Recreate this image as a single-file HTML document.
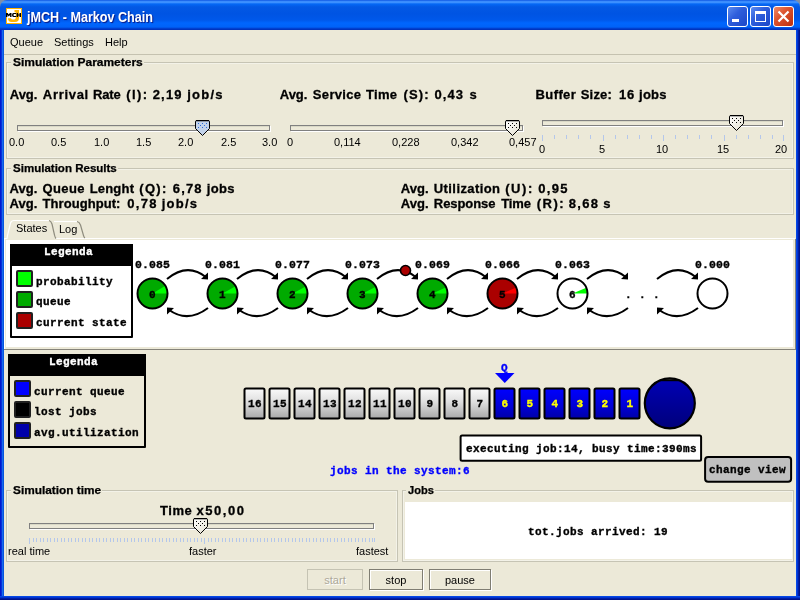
<!DOCTYPE html>
<html>
<head>
<meta charset="utf-8">
<title>jMCH - Markov Chain</title>
<style>
html,body{margin:0;padding:0;}
body{width:800px;height:600px;overflow:hidden;background:#ECE9D8;position:relative;font-family:"Liberation Sans",sans-serif;font-size:11px;color:#000;}
.abs{position:absolute;will-change:opacity;}
#titlebar{left:0;top:0;width:800px;height:30px;background:linear-gradient(to bottom,#0046DB 0px,#3A8AFB 1px,#3C90FF 2.5px,#0568F5 4px,#0358E4 7px,#0054E3 14px,#0058EA 20px,#0066FE 23px,#0062F8 27px,#0040D0 28.5px,#002CB5 30px);border-radius:7px 7px 0 0;}
#bl{left:0;top:30px;width:4px;height:570px;background:linear-gradient(to right,#0019CF 0px,#0019CF 1px,#0831D9 1px,#0831D9 2px,#166AEE 2px,#166AEE 3px,#0855DD 3px,#0855DD 4px);}
#br{left:796px;top:30px;width:4px;height:570px;background:linear-gradient(to right,#0547E6 0px,#0547E6 1px,#0035D2 1px,#0035D2 2px,#001EA6 2px,#001EA6 3px,#001289 3px,#001289 4px);}
#bb{left:0;top:596px;width:800px;height:4px;background:linear-gradient(to bottom,#0547E6 0px,#0547E6 1px,#0035D2 1px,#0035D2 2px,#001EA6 2px,#001EA6 3px,#001289 3px,#001289 4px);}
#title{left:27px;top:9px;font-weight:bold;font-size:14px;color:#fff;white-space:nowrap;text-shadow:1px 1px 1px #0A1883;transform:scaleX(0.9);transform-origin:0 0;line-height:16px;}
.menu{top:36px;font-size:11px;white-space:nowrap;line-height:13px;}
.grp{border:1px solid #C6C4B4;box-sizing:border-box;box-shadow:inset 0 0 0 1px #F3F2E8;}
.gt{-webkit-text-stroke:0.25px #000;font-weight:bold;font-size:10px;white-space:nowrap;line-height:13px;transform-origin:0 0;}
.gap{background:#ECE9D8;height:2px;}
.big{-webkit-text-stroke:0.3px #000;font-weight:bold;font-size:13px;white-space:nowrap;line-height:15px;letter-spacing:0.55px;}
.sl{font-size:11px;white-space:nowrap;line-height:13px;}
.track{box-sizing:border-box;height:6px;border:1px solid #808080;background:linear-gradient(to bottom,#D9D8C6 0px,#D9D8C6 1px,#ECE9D8 1px);box-shadow:1px 1px 0 #fff;}
.mono{-webkit-text-stroke:0.35px currentColor;font-family:"Liberation Mono",monospace;font-weight:bold;white-space:nowrap;letter-spacing:0.4px;}
.btn{box-sizing:border-box;border:1px solid #003C74;border-radius:3px;background:linear-gradient(to bottom,#fff,#F0EFE6 85%,#D6D0C5);font-size:11px;text-align:center;line-height:19px;}
</style>
</head>
<body>
<div id="titlebar" class="abs"></div>
<div id="bl" class="abs"></div>
<div id="br" class="abs"></div>
<div id="bb" class="abs"></div>

<div class="abs" style="left:0;top:0;width:8px;height:8px;background:#7F8FA8;z-index:-1;"></div>
<div class="abs" style="left:792px;top:0;width:8px;height:8px;background:#7F8FA8;z-index:-1;"></div>
<svg class="abs" style="left:6px;top:8px;" width="16" height="16" viewBox="0 0 16 16"><rect width="16" height="16" fill="#FFB400"/><rect x="1" y="1" width="14" height="14" fill="#fff"/><path d="M8.5,2 L13,2 L13,10 Q13,14 9,14 L5.5,14 Q2,13.8 2,10.2 L5,10.2 Q5.3,11.6 6.8,11.6 L8.2,11.6 Q9.8,11.6 9.8,9.6 L9.8,4.2 L8.5,4.2 Z" fill="#FFB400"/><g fill="#000"><path d="M0,9 V5 H1.6 L2.75,6.6 L3.9,5 H5.5 V9 H4.1 V7 L2.75,8.6 L1.4,7 V9 Z"/><path d="M10,5 H7.5 Q6,5 6,7 Q6,9 7.5,9 H10 V7.9 H8 Q7.5,7.9 7.5,7 Q7.5,6.1 8,6.1 H10 Z"/><path d="M10.6,5 H12.1 V6.4 H13.5 V5 H15 V9 H13.5 V7.6 H12.1 V9 H10.6 Z"/></g></svg>
<!-- window buttons -->
<div class="abs" style="left:727px;top:6px;width:21px;height:21px;box-sizing:border-box;border:1px solid #fff;border-radius:3px;background:linear-gradient(135deg,#5C8CF0 0%,#2F5FDC 40%,#1C46C8 100%);"></div>
<div class="abs" style="left:732px;top:19px;width:7px;height:3px;background:#fff;"></div>
<div class="abs" style="left:750px;top:6px;width:21px;height:21px;box-sizing:border-box;border:1px solid #fff;border-radius:3px;background:linear-gradient(135deg,#5C8CF0 0%,#2F5FDC 40%,#1C46C8 100%);"></div>
<div class="abs" style="left:755px;top:11px;width:11px;height:11px;box-sizing:border-box;border:1px solid #fff;border-top:3px solid #fff;"></div>
<div class="abs" style="left:773px;top:6px;width:21px;height:21px;box-sizing:border-box;border:1px solid #fff;border-radius:3px;background:linear-gradient(135deg,#EE8A68 0%,#DC5430 40%,#BE2E0C 100%);"></div>
<svg class="abs" style="left:773px;top:6px;" width="21" height="21" viewBox="0 0 21 21"><path d="M5.5,5.5 L15.5,15.5 M15.5,5.5 L5.5,15.5" stroke="#fff" stroke-width="2.2" fill="none"/></svg>
<div id="title" class="abs">jMCH - Markov Chain</div>

<div class="abs menu" style="left:10px;">Queue</div>
<div class="abs menu" style="left:54px;">Settings</div>
<div class="abs menu" style="left:105px;">Help</div>
<div class="abs" style="left:4px;top:54px;width:792px;height:1px;background:#C5C2B0;"></div>

<div class="abs grp" style="left:6px;top:62px;width:788px;height:97px;"></div>
<div class="abs gap" style="left:11px;top:62px;width:133px;"></div><div class="abs gt" style="left:12.7px;top:56px;transform:scaleX(1.197);">Simulation Parameters</div>

<div class="abs grp" style="left:6px;top:168px;width:788px;height:47px;"></div>
<div class="abs gap" style="left:11px;top:168px;width:107px;"></div><div class="abs gt" style="left:12.7px;top:162px;transform:scaleX(1.153);">Simulation Results</div>

<!-- Parameter labels -->
<!--t_arr--><span class="abs big" style="left:9.8px;top:87px;letter-spacing:-0.05px;">Avg.</span><span class="abs big" style="left:42.8px;top:87px;letter-spacing:0.70px;">Arrival</span><span class="abs big" style="left:93.1px;top:87px;letter-spacing:-0.20px;">Rate</span><span class="abs big" style="left:126.2px;top:87px;letter-spacing:1.43px;">(l):</span><span class="abs big" style="left:152.7px;top:87px;letter-spacing:1.20px;">2,19</span><span class="abs big" style="left:187.2px;top:87px;letter-spacing:1.24px;">job/s</span><!--/t_arr-->
<!--t_srv--><span class="abs big" style="left:279.8px;top:87px;letter-spacing:-0.05px;">Avg.</span><span class="abs big" style="left:312.8px;top:87px;letter-spacing:0.34px;">Service</span><span class="abs big" style="left:366.0px;top:87px;letter-spacing:0.30px;">Time</span><span class="abs big" style="left:403.4px;top:87px;letter-spacing:1.18px;">(S):</span><span class="abs big" style="left:434.4px;top:87px;letter-spacing:1.11px;">0,43</span><span class="abs big" style="left:469.5px;top:87px;letter-spacing:0.00px;">s</span><!--/t_srv-->
<!--t_buf--><span class="abs big" style="left:535.6px;top:87px;letter-spacing:0.38px;">Buffer</span><span class="abs big" style="left:580.8px;top:87px;letter-spacing:0.15px;">Size:</span><span class="abs big" style="left:619.0px;top:87px;letter-spacing:0.73px;">16</span><span class="abs big" style="left:639.1px;top:87px;letter-spacing:0.19px;">jobs</span><!--/t_buf-->

<!-- slider 1 -->
<div class="abs track" style="left:17px;top:125px;width:253px;"></div>
<svg class="abs" style="left:195px;top:120px;" width="15" height="16" viewBox="0 0 15 16"><path d="M1,0.6 L0.5,1.2 L0.5,8.5 L7.5,15.5 L14.5,8.5 L14.5,1.2 L14,0.6 Z" fill="#C3D3EA" stroke="#000" stroke-width="1"/><rect x="1" y="0" width="13" height="1.2" fill="#000"/><g fill="#2A6BD8"><rect x="3" y="3" width="1" height="1"/><rect x="7" y="3" width="1" height="1"/><rect x="11" y="3" width="1" height="1"/><rect x="5" y="5" width="1" height="1"/><rect x="9" y="5" width="1" height="1"/><rect x="3" y="7" width="1" height="1"/><rect x="7" y="7" width="1" height="1"/><rect x="11" y="7" width="1" height="1"/></g></svg>
<div class="abs sl" style="left:9px;top:136px;">0.0</div>
<div class="abs sl" style="left:51px;top:136px;">0.5</div>
<div class="abs sl" style="left:94px;top:136px;">1.0</div>
<div class="abs sl" style="left:136px;top:136px;">1.5</div>
<div class="abs sl" style="left:178px;top:136px;">2.0</div>
<div class="abs sl" style="left:221px;top:136px;">2.5</div>
<div class="abs sl" style="left:262px;top:136px;">3.0</div>

<!-- slider 2 -->
<div class="abs track" style="left:290px;top:125px;width:233px;"></div>
<svg class="abs" style="left:505px;top:120px;" width="15" height="16" viewBox="0 0 15 16"><defs><linearGradient id="tg" x1="0" y1="0" x2="1" y2="1"><stop offset="0" stop-color="#fff"/><stop offset="1" stop-color="#E3E0D0"/></linearGradient></defs><path d="M1,0.6 L0.5,1.2 L0.5,8.5 L7.5,15.5 L14.5,8.5 L14.5,1.2 L14,0.6 Z" fill="url(#tg)" stroke="#000" stroke-width="1"/><rect x="1" y="0" width="13" height="1.2" fill="#000"/><g fill="#000"><rect x="3" y="3" width="1" height="1"/><rect x="7" y="3" width="1" height="1"/><rect x="11" y="3" width="1" height="1"/><rect x="5" y="5" width="1" height="1"/><rect x="9" y="5" width="1" height="1"/><rect x="3" y="7" width="1" height="1"/><rect x="7" y="7" width="1" height="1"/><rect x="11" y="7" width="1" height="1"/></g></svg>
<div class="abs sl" style="left:287px;top:136px;">0</div>
<div class="abs sl" style="left:334px;top:136px;">0,114</div>
<div class="abs sl" style="left:392px;top:136px;">0,228</div>
<div class="abs sl" style="left:451px;top:136px;">0,342</div>
<div class="abs sl" style="left:509px;top:136px;">0,457</div>

<!-- slider 3 -->
<div class="abs track" style="left:542px;top:120px;width:241px;"></div>
<svg class="abs" style="left:729px;top:115px;" width="15" height="16" viewBox="0 0 15 16"><path d="M1,0.6 L0.5,1.2 L0.5,8.5 L7.5,15.5 L14.5,8.5 L14.5,1.2 L14,0.6 Z" fill="url(#tg)" stroke="#000" stroke-width="1"/><rect x="1" y="0" width="13" height="1.2" fill="#000"/><g fill="#000"><rect x="3" y="3" width="1" height="1"/><rect x="7" y="3" width="1" height="1"/><rect x="11" y="3" width="1" height="1"/><rect x="5" y="5" width="1" height="1"/><rect x="9" y="5" width="1" height="1"/><rect x="3" y="7" width="1" height="1"/><rect x="7" y="7" width="1" height="1"/><rect x="11" y="7" width="1" height="1"/></g></svg>
<svg class="abs" style="left:540px;top:135px;" width="250" height="8" viewBox="0 0 250 8"><rect x="2" y="0" width="1" height="6" fill="#B4C7EB"/><rect x="14" y="0" width="1" height="4" fill="#B4C7EB"/><rect x="26" y="0" width="1" height="4" fill="#B4C7EB"/><rect x="38" y="0" width="1" height="4" fill="#B4C7EB"/><rect x="50" y="0" width="1" height="4" fill="#B4C7EB"/><rect x="63" y="0" width="1" height="6" fill="#B4C7EB"/><rect x="75" y="0" width="1" height="4" fill="#B4C7EB"/><rect x="87" y="0" width="1" height="4" fill="#B4C7EB"/><rect x="99" y="0" width="1" height="4" fill="#B4C7EB"/><rect x="111" y="0" width="1" height="4" fill="#B4C7EB"/><rect x="123" y="0" width="1" height="6" fill="#B4C7EB"/><rect x="135" y="0" width="1" height="4" fill="#B4C7EB"/><rect x="147" y="0" width="1" height="4" fill="#B4C7EB"/><rect x="159" y="0" width="1" height="4" fill="#B4C7EB"/><rect x="171" y="0" width="1" height="4" fill="#B4C7EB"/><rect x="184" y="0" width="1" height="6" fill="#B4C7EB"/><rect x="196" y="0" width="1" height="4" fill="#B4C7EB"/><rect x="208" y="0" width="1" height="4" fill="#B4C7EB"/><rect x="220" y="0" width="1" height="4" fill="#B4C7EB"/><rect x="232" y="0" width="1" height="4" fill="#B4C7EB"/><rect x="243" y="0" width="1" height="6" fill="#B4C7EB"/></svg>
<div class="abs sl" style="left:539px;top:143px;">0</div>
<div class="abs sl" style="left:599px;top:143px;">5</div>
<div class="abs sl" style="left:656px;top:143px;">10</div>
<div class="abs sl" style="left:717px;top:143px;">15</div>
<div class="abs sl" style="left:775px;top:143px;">20</div>

<!-- results -->
<!--r1--><span class="abs big" style="left:9.6px;top:181px;letter-spacing:0.03px;">Avg.</span><span class="abs big" style="left:42.6px;top:181px;letter-spacing:0.36px;">Queue</span><span class="abs big" style="left:89.7px;top:181px;letter-spacing:0.19px;">Lenght</span><span class="abs big" style="left:139.2px;top:181px;letter-spacing:1.36px;">(Q):</span><span class="abs big" style="left:172.8px;top:181px;letter-spacing:1.13px;">6,78</span><span class="abs big" style="left:206.7px;top:181px;letter-spacing:0.36px;">jobs</span><!--/r1-->
<!--r2--><span class="abs big" style="left:9.6px;top:196px;letter-spacing:0.03px;">Avg.</span><span class="abs big" style="left:42.6px;top:196px;letter-spacing:0.06px;">Throughput:</span><span class="abs big" style="left:127.2px;top:196px;letter-spacing:1.33px;">0,78</span><span class="abs big" style="left:161.7px;top:196px;letter-spacing:1.24px;">job/s</span><!--/r2-->
<!--r3--><span class="abs big" style="left:400.8px;top:181px;letter-spacing:0.03px;">Avg.</span><span class="abs big" style="left:433.8px;top:181px;letter-spacing:0.41px;">Utilization</span><span class="abs big" style="left:505.2px;top:181px;letter-spacing:1.60px;">(U):</span><span class="abs big" style="left:538.2px;top:181px;letter-spacing:1.33px;">0,95</span><!--/r3-->
<!--r4--><span class="abs big" style="left:400.8px;top:196px;letter-spacing:0.03px;">Avg.</span><span class="abs big" style="left:433.8px;top:196px;letter-spacing:-0.06px;">Response</span><span class="abs big" style="left:501.3px;top:196px;letter-spacing:-0.17px;">Time</span><span class="abs big" style="left:536.7px;top:196px;letter-spacing:1.50px;">(R):</span><span class="abs big" style="left:568.8px;top:196px;letter-spacing:1.33px;">8,68</span><span class="abs big" style="left:603.3px;top:196px;letter-spacing:0.00px;">s</span><!--/r4-->
























<!-- LOWER -->

<!-- tabs -->
<div class="abs" style="left:4px;top:238px;width:791px;height:1px;background:#fff;"></div>
<div class="abs" style="left:4px;top:239px;width:1px;height:110px;background:#fff;"></div>
<div class="abs" style="left:6px;top:240px;width:787px;height:107px;background:#fff;"></div>
<div class="abs" style="left:4px;top:349px;width:792px;height:1px;background:#86847A;"></div>
<div class="abs" style="left:795px;top:239px;width:1px;height:111px;background:#86847A;"></div>
<svg class="abs" style="left:0;top:215px;" width="120" height="26" viewBox="0 0 120 26">
<path d="M4,25 L7,23.5 L7.5,20.5 L10.5,8 Q11.5,5.5 14,5.5 L49,5.5 Q51,6 52,9 L54.5,20 Q55,22.5 56,23.5 L56,25 L4,25 Z" fill="#ECE9D8"/>
<path d="M4,23.5 L7,23.5 L7.5,20.5 L10.5,8 Q11.5,5.5 14,5.5 L49,5.5" fill="none" stroke="#fff" stroke-width="1.2"/>
<path d="M49,5.5 Q51,6 52,9 L54.5,20 Q55,22.5 56,23.5" fill="none" stroke="#8E8C7E" stroke-width="1.2"/>
<path d="M54,6.5 L77,6.5" fill="none" stroke="#fff" stroke-width="1.2"/>
<path d="M77,6.5 Q79.5,7 80.5,10 L83.5,20.5 Q84,22.5 85,23" fill="none" stroke="#8E8C7E" stroke-width="1.2"/>
</svg>
<div id="tab1" class="abs" style="left:16px;top:222px;font-size:11px;line-height:13px;white-space:nowrap;">States</div>
<div id="tab2" class="abs" style="left:59px;top:223px;font-size:11px;line-height:13px;white-space:nowrap;">Log</div>

<div class="abs" style="left:10px;top:244px;width:123px;height:94px;box-sizing:border-box;border:2px solid #000;background:#fff;border-radius:1px;"></div>
<div class="abs" style="left:10px;top:244px;width:123px;height:22px;background:#000;"></div>
<div id="lah" class="abs mono" style="left:44px;top:245px;color:#fff;font-size:11px;line-height:14px;">Legenda</div>
<div class="abs" style="left:16px;top:270px;width:17px;height:17px;box-sizing:border-box;border:2px solid #202020;border-radius:2px;background:#00FF00;"></div>
<div id="la0" class="abs mono" style="left:36px;top:275px;font-size:11px;line-height:14px;">probability</div>
<div class="abs" style="left:16px;top:291px;width:17px;height:17px;box-sizing:border-box;border:2px solid #202020;border-radius:2px;background:#00AA00;"></div>
<div id="la1" class="abs mono" style="left:36px;top:295px;font-size:11px;line-height:14px;">queue</div>
<div class="abs" style="left:16px;top:312px;width:17px;height:17px;box-sizing:border-box;border:2px solid #202020;border-radius:2px;background:#AA0000;"></div>
<div id="la2" class="abs mono" style="left:36px;top:316px;font-size:11px;line-height:14px;">current state</div>

<div class="abs" style="left:8px;top:354px;width:138px;height:94px;box-sizing:border-box;border:2px solid #000;background:#ECE9D8;border-radius:1px;"></div>
<div class="abs" style="left:8px;top:354px;width:138px;height:22px;background:#000;"></div>
<div id="lbh" class="abs mono" style="left:49px;top:355px;color:#fff;font-size:11px;line-height:14px;">Legenda</div>
<div class="abs" style="left:14px;top:380px;width:17px;height:17px;box-sizing:border-box;border:2px solid #202020;border-radius:2px;background:#0000FF;"></div>
<div id="lb0" class="abs mono" style="left:34px;top:385px;font-size:11px;line-height:14px;">current queue</div>
<div class="abs" style="left:14px;top:401px;width:17px;height:17px;box-sizing:border-box;border:2px solid #202020;border-radius:2px;background:#000000;"></div>
<div id="lb1" class="abs mono" style="left:34px;top:405px;font-size:11px;line-height:14px;">lost jobs</div>
<div class="abs" style="left:14px;top:422px;width:17px;height:17px;box-sizing:border-box;border:2px solid #202020;border-radius:2px;background:#0000AA;"></div>
<div id="lb2" class="abs mono" style="left:34px;top:426px;font-size:11px;line-height:14px;">avg.utilization</div>

<svg class="abs" style="left:0;top:240px;" width="800" height="108" viewBox="0 240 800 108">
<path d="M167.0,279 Q187.5,262 206.5,277.5" fill="none" stroke="#000" stroke-width="2"/><path d="M208.0,279.5 L208.0,272.5 L201.0,279 Z" fill="#000"/><path d="M208.0,308 Q187.5,323.5 168.5,309.5" fill="none" stroke="#000" stroke-width="2"/><path d="M167.0,307.5 L167.0,314.5 L174.0,308 Z" fill="#000"/>
<path d="M237.0,279 Q257.5,262 276.5,277.5" fill="none" stroke="#000" stroke-width="2"/><path d="M278.0,279.5 L278.0,272.5 L271.0,279 Z" fill="#000"/><path d="M278.0,308 Q257.5,323.5 238.5,309.5" fill="none" stroke="#000" stroke-width="2"/><path d="M237.0,307.5 L237.0,314.5 L244.0,308 Z" fill="#000"/>
<path d="M307.0,279 Q327.5,262 346.5,277.5" fill="none" stroke="#000" stroke-width="2"/><path d="M348.0,279.5 L348.0,272.5 L341.0,279 Z" fill="#000"/><path d="M348.0,308 Q327.5,323.5 308.5,309.5" fill="none" stroke="#000" stroke-width="2"/><path d="M307.0,307.5 L307.0,314.5 L314.0,308 Z" fill="#000"/>
<path d="M377.0,279 Q397.5,262 416.5,277.5" fill="none" stroke="#000" stroke-width="2"/><path d="M418.0,279.5 L418.0,272.5 L411.0,279 Z" fill="#000"/><path d="M418.0,308 Q397.5,323.5 378.5,309.5" fill="none" stroke="#000" stroke-width="2"/><path d="M377.0,307.5 L377.0,314.5 L384.0,308 Z" fill="#000"/>
<path d="M447.0,279 Q467.5,262 486.5,277.5" fill="none" stroke="#000" stroke-width="2"/><path d="M488.0,279.5 L488.0,272.5 L481.0,279 Z" fill="#000"/><path d="M488.0,308 Q467.5,323.5 448.5,309.5" fill="none" stroke="#000" stroke-width="2"/><path d="M447.0,307.5 L447.0,314.5 L454.0,308 Z" fill="#000"/>
<path d="M517.0,279 Q537.5,262 556.5,277.5" fill="none" stroke="#000" stroke-width="2"/><path d="M558.0,279.5 L558.0,272.5 L551.0,279 Z" fill="#000"/><path d="M558.0,308 Q537.5,323.5 518.5,309.5" fill="none" stroke="#000" stroke-width="2"/><path d="M517.0,307.5 L517.0,314.5 L524.0,308 Z" fill="#000"/>
<path d="M587.0,279 Q607.5,262 626.5,277.5" fill="none" stroke="#000" stroke-width="2"/><path d="M628.0,279.5 L628.0,272.5 L621.0,279 Z" fill="#000"/><path d="M628.0,308 Q607.5,323.5 588.5,309.5" fill="none" stroke="#000" stroke-width="2"/><path d="M587.0,307.5 L587.0,314.5 L594.0,308 Z" fill="#000"/>
<path d="M657.0,279 Q677.5,262 696.5,277.5" fill="none" stroke="#000" stroke-width="2"/><path d="M698.0,279.5 L698.0,272.5 L691.0,279 Z" fill="#000"/><path d="M698.0,308 Q677.5,323.5 658.5,309.5" fill="none" stroke="#000" stroke-width="2"/><path d="M657.0,307.5 L657.0,314.5 L664.0,308 Z" fill="#000"/>
<circle cx="152.5" cy="293.5" r="15" fill="#00AA00"/><path d="M152.5,293.5 L167.5,293.5 A15,15 0 0 0 165.41,285.86 Z" fill="#00FF00"/><circle cx="152.5" cy="293.5" r="15" fill="none" stroke="#000" stroke-width="2"/>
<circle cx="222.5" cy="293.5" r="15" fill="#00AA00"/><path d="M222.5,293.5 L237.5,293.5 A15,15 0 0 0 235.60,286.19 Z" fill="#00FF00"/><circle cx="222.5" cy="293.5" r="15" fill="none" stroke="#000" stroke-width="2"/>
<circle cx="292.5" cy="293.5" r="15" fill="#00AA00"/><path d="M292.5,293.5 L307.5,293.5 A15,15 0 0 0 305.78,286.52 Z" fill="#00FF00"/><circle cx="292.5" cy="293.5" r="15" fill="none" stroke="#000" stroke-width="2"/>
<circle cx="362.5" cy="293.5" r="15" fill="#00AA00"/><path d="M362.5,293.5 L377.5,293.5 A15,15 0 0 0 375.95,286.86 Z" fill="#00FF00"/><circle cx="362.5" cy="293.5" r="15" fill="none" stroke="#000" stroke-width="2"/>
<circle cx="432.5" cy="293.5" r="15" fill="#00AA00"/><path d="M432.5,293.5 L447.5,293.5 A15,15 0 0 0 446.11,287.20 Z" fill="#00FF00"/><circle cx="432.5" cy="293.5" r="15" fill="none" stroke="#000" stroke-width="2"/>
<circle cx="502.5" cy="293.5" r="15" fill="#AA0000"/><path d="M502.5,293.5 L517.5,293.5 A15,15 0 0 0 516.23,287.46 Z" fill="#FF0000"/><circle cx="502.5" cy="293.5" r="15" fill="none" stroke="#000" stroke-width="2"/>
<circle cx="572.5" cy="293.5" r="15" fill="#fff"/><path d="M572.5,293.5 L587.5,293.5 A15,15 0 0 0 586.34,287.72 Z" fill="#00FF00"/><circle cx="572.5" cy="293.5" r="15" fill="none" stroke="#000" stroke-width="2"/>
<circle cx="712.5" cy="293.5" r="15" fill="#fff"/><circle cx="712.5" cy="293.5" r="15" fill="none" stroke="#000" stroke-width="2"/>
<circle cx="405.5" cy="270.5" r="5" fill="#AA0000" stroke="#000" stroke-width="1.6"/>
</svg>
<div id="p0" class="abs mono" style="left:122.5px;top:258px;width:60px;text-align:center;font-size:11.5px;line-height:14px;letter-spacing:0.1px;">0.085</div>
<div id="s0" class="abs mono" style="left:122.5px;top:288px;width:60px;text-align:center;font-size:11px;line-height:14px;">0</div>
<div id="p1" class="abs mono" style="left:192.5px;top:258px;width:60px;text-align:center;font-size:11.5px;line-height:14px;letter-spacing:0.1px;">0.081</div>
<div id="s1" class="abs mono" style="left:192.5px;top:288px;width:60px;text-align:center;font-size:11px;line-height:14px;">1</div>
<div id="p2" class="abs mono" style="left:262.5px;top:258px;width:60px;text-align:center;font-size:11.5px;line-height:14px;letter-spacing:0.1px;">0.077</div>
<div id="s2" class="abs mono" style="left:262.5px;top:288px;width:60px;text-align:center;font-size:11px;line-height:14px;">2</div>
<div id="p3" class="abs mono" style="left:332.5px;top:258px;width:60px;text-align:center;font-size:11.5px;line-height:14px;letter-spacing:0.1px;">0.073</div>
<div id="s3" class="abs mono" style="left:332.5px;top:288px;width:60px;text-align:center;font-size:11px;line-height:14px;">3</div>
<div id="p4" class="abs mono" style="left:402.5px;top:258px;width:60px;text-align:center;font-size:11.5px;line-height:14px;letter-spacing:0.1px;">0.069</div>
<div id="s4" class="abs mono" style="left:402.5px;top:288px;width:60px;text-align:center;font-size:11px;line-height:14px;">4</div>
<div id="p5" class="abs mono" style="left:472.5px;top:258px;width:60px;text-align:center;font-size:11.5px;line-height:14px;letter-spacing:0.1px;">0.066</div>
<div id="s5" class="abs mono" style="left:472.5px;top:288px;width:60px;text-align:center;font-size:11px;line-height:14px;">5</div>
<div id="p6" class="abs mono" style="left:542.5px;top:258px;width:60px;text-align:center;font-size:11.5px;line-height:14px;letter-spacing:0.1px;">0.063</div>
<div id="s6" class="abs mono" style="left:542.5px;top:288px;width:60px;text-align:center;font-size:11px;line-height:14px;">6</div>
<div id="dots" class="abs mono" style="left:612.5px;top:288px;width:60px;text-align:center;font-size:11px;line-height:14px;">. . .</div>
<div id="p8" class="abs mono" style="left:682.5px;top:258px;width:60px;text-align:center;font-size:11.5px;line-height:14px;letter-spacing:0.1px;">0.000</div>
<svg class="abs" style="left:240px;top:384px;" width="410" height="40" viewBox="240 384 410 40"><defs><linearGradient id="qg" x1="0" y1="0" x2="0" y2="1"><stop offset="0" stop-color="#FAFAFA"/><stop offset="0.45" stop-color="#DEDEDE"/><stop offset="1" stop-color="#A8A8A8"/></linearGradient><linearGradient id="qb" x1="0" y1="0" x2="0" y2="1"><stop offset="0" stop-color="#0000FF"/><stop offset="0.55" stop-color="#0000D8"/><stop offset="1" stop-color="#0000A8"/></linearGradient></defs><rect x="244.5" y="388.5" width="20" height="30" rx="1.5" fill="url(#qg)" stroke="#000" stroke-width="2"/><rect x="269.5" y="388.5" width="20" height="30" rx="1.5" fill="url(#qg)" stroke="#000" stroke-width="2"/><rect x="294.5" y="388.5" width="20" height="30" rx="1.5" fill="url(#qg)" stroke="#000" stroke-width="2"/><rect x="319.5" y="388.5" width="20" height="30" rx="1.5" fill="url(#qg)" stroke="#000" stroke-width="2"/><rect x="344.5" y="388.5" width="20" height="30" rx="1.5" fill="url(#qg)" stroke="#000" stroke-width="2"/><rect x="369.5" y="388.5" width="20" height="30" rx="1.5" fill="url(#qg)" stroke="#000" stroke-width="2"/><rect x="394.5" y="388.5" width="20" height="30" rx="1.5" fill="url(#qg)" stroke="#000" stroke-width="2"/><rect x="419.5" y="388.5" width="20" height="30" rx="1.5" fill="url(#qg)" stroke="#000" stroke-width="2"/><rect x="444.5" y="388.5" width="20" height="30" rx="1.5" fill="url(#qg)" stroke="#000" stroke-width="2"/><rect x="469.5" y="388.5" width="20" height="30" rx="1.5" fill="url(#qg)" stroke="#000" stroke-width="2"/><rect x="494.5" y="388.5" width="20" height="30" rx="1.5" fill="url(#qb)" stroke="#000" stroke-width="2"/><rect x="519.5" y="388.5" width="20" height="30" rx="1.5" fill="url(#qb)" stroke="#000" stroke-width="2"/><rect x="544.5" y="388.5" width="20" height="30" rx="1.5" fill="url(#qb)" stroke="#000" stroke-width="2"/><rect x="569.5" y="388.5" width="20" height="30" rx="1.5" fill="url(#qb)" stroke="#000" stroke-width="2"/><rect x="594.5" y="388.5" width="20" height="30" rx="1.5" fill="url(#qb)" stroke="#000" stroke-width="2"/><rect x="619.5" y="388.5" width="20" height="30" rx="1.5" fill="url(#qb)" stroke="#000" stroke-width="2"/></svg>
<div class="abs mono" style="left:244px;top:397px;width:22px;color:#000;font-size:11px;line-height:14px;text-align:center;">16</div>
<div class="abs mono" style="left:269px;top:397px;width:22px;color:#000;font-size:11px;line-height:14px;text-align:center;">15</div>
<div class="abs mono" style="left:294px;top:397px;width:22px;color:#000;font-size:11px;line-height:14px;text-align:center;">14</div>
<div class="abs mono" style="left:319px;top:397px;width:22px;color:#000;font-size:11px;line-height:14px;text-align:center;">13</div>
<div class="abs mono" style="left:344px;top:397px;width:22px;color:#000;font-size:11px;line-height:14px;text-align:center;">12</div>
<div class="abs mono" style="left:369px;top:397px;width:22px;color:#000;font-size:11px;line-height:14px;text-align:center;">11</div>
<div class="abs mono" style="left:394px;top:397px;width:22px;color:#000;font-size:11px;line-height:14px;text-align:center;">10</div>
<div class="abs mono" style="left:419px;top:397px;width:22px;color:#000;font-size:11px;line-height:14px;text-align:center;">9</div>
<div class="abs mono" style="left:444px;top:397px;width:22px;color:#000;font-size:11px;line-height:14px;text-align:center;">8</div>
<div class="abs mono" style="left:469px;top:397px;width:22px;color:#000;font-size:11px;line-height:14px;text-align:center;">7</div>
<div class="abs mono" style="left:494px;top:397px;width:22px;color:#FFFF00;font-size:11px;line-height:14px;text-align:center;">6</div>
<div class="abs mono" style="left:519px;top:397px;width:22px;color:#FFFF00;font-size:11px;line-height:14px;text-align:center;">5</div>
<div class="abs mono" style="left:544px;top:397px;width:22px;color:#FFFF00;font-size:11px;line-height:14px;text-align:center;">4</div>
<div class="abs mono" style="left:569px;top:397px;width:22px;color:#FFFF00;font-size:11px;line-height:14px;text-align:center;">3</div>
<div class="abs mono" style="left:594px;top:397px;width:22px;color:#FFFF00;font-size:11px;line-height:14px;text-align:center;">2</div>
<div class="abs mono" style="left:619px;top:397px;width:22px;color:#FFFF00;font-size:11px;line-height:14px;text-align:center;">1</div>
<div id="qm" class="abs mono" style="left:494px;top:361px;width:21px;text-align:center;color:#0000FF;font-size:11px;line-height:14px;">Q</div>
<svg class="abs" style="left:494px;top:372px;" width="22" height="12" viewBox="494 372 22 12"><path d="M495,373 L514.5,373 L504.75,383 Z" fill="#0000FF"/></svg>
<svg class="abs" style="left:640px;top:374px;" width="60" height="60" viewBox="640 374 60 60"><defs><linearGradient id="sg" x1="0" y1="0" x2="0" y2="1"><stop offset="0" stop-color="#0000B4"/><stop offset="1" stop-color="#000074"/></linearGradient><clipPath id="sc"><circle cx="669.8" cy="403.3" r="25"/></clipPath></defs><circle cx="669.8" cy="403.3" r="25" fill="#6A6A66"/><rect x="640" y="380" width="60" height="54" fill="url(#sg)" clip-path="url(#sc)"/><rect x="640" y="379.6" width="60" height="1.6" fill="#000" clip-path="url(#sc)"/><circle cx="669.8" cy="403.3" r="25" fill="none" stroke="#000" stroke-width="2.2"/></svg>
<svg class="abs" style="left:455px;top:430px;" width="345" height="58" viewBox="455 430 345 58"><rect x="460.6" y="435.5" width="240.5" height="25.3" rx="1.5" fill="#fff" stroke="#000" stroke-width="2"/><rect x="705.1" y="456.9" width="86" height="24.8" rx="3" fill="#C0C0C0" stroke="#000" stroke-width="2"/></svg>
<div id="exe" class="abs mono" style="left:466px;top:442px;font-size:11px;line-height:14px;">executing job:14, busy time:390ms</div>
<div id="cv" class="abs mono" style="left:709px;top:463px;font-size:11px;line-height:14px;">change view</div>
<div id="jis" class="abs mono" style="left:330px;top:464px;font-size:11px;line-height:14px;color:#0000FF;">jobs in the system:6</div>
<div class="abs grp" style="left:6px;top:490px;width:392px;height:72px;"></div>
<div class="abs gap" style="left:11px;top:490px;width:91px;"></div><div id="g3" class="abs gt" style="left:12.5px;top:484px;transform:scaleX(1.183);">Simulation time</div>
<span class="abs big" style="left:160.0px;top:503px;letter-spacing:0.56px;">Time</span><span class="abs big" style="left:196.5px;top:503px;letter-spacing:1.55px;">x50,00</span>
<div class="abs track" style="left:29px;top:523px;width:345px;"></div>
<svg class="abs" style="left:0px;top:538px;" width="400" height="6" viewBox="0 0 400 6"><rect x="29" y="0" width="1" height="6" fill="#B4C7EB"/><rect x="33" y="0" width="1" height="4" fill="#B4C7EB"/><rect x="36" y="0" width="1" height="4" fill="#B4C7EB"/><rect x="40" y="0" width="1" height="4" fill="#B4C7EB"/><rect x="43" y="0" width="1" height="4" fill="#B4C7EB"/><rect x="47" y="0" width="1" height="4" fill="#B4C7EB"/><rect x="50" y="0" width="1" height="4" fill="#B4C7EB"/><rect x="54" y="0" width="1" height="4" fill="#B4C7EB"/><rect x="57" y="0" width="1" height="4" fill="#B4C7EB"/><rect x="61" y="0" width="1" height="4" fill="#B4C7EB"/><rect x="64" y="0" width="1" height="4" fill="#B4C7EB"/><rect x="68" y="0" width="1" height="4" fill="#B4C7EB"/><rect x="71" y="0" width="1" height="4" fill="#B4C7EB"/><rect x="75" y="0" width="1" height="4" fill="#B4C7EB"/><rect x="78" y="0" width="1" height="4" fill="#B4C7EB"/><rect x="82" y="0" width="1" height="4" fill="#B4C7EB"/><rect x="85" y="0" width="1" height="4" fill="#B4C7EB"/><rect x="89" y="0" width="1" height="4" fill="#B4C7EB"/><rect x="92" y="0" width="1" height="4" fill="#B4C7EB"/><rect x="96" y="0" width="1" height="4" fill="#B4C7EB"/><rect x="99" y="0" width="1" height="4" fill="#B4C7EB"/><rect x="103" y="0" width="1" height="4" fill="#B4C7EB"/><rect x="106" y="0" width="1" height="4" fill="#B4C7EB"/><rect x="110" y="0" width="1" height="4" fill="#B4C7EB"/><rect x="113" y="0" width="1" height="4" fill="#B4C7EB"/><rect x="117" y="0" width="1" height="4" fill="#B4C7EB"/><rect x="120" y="0" width="1" height="4" fill="#B4C7EB"/><rect x="124" y="0" width="1" height="4" fill="#B4C7EB"/><rect x="127" y="0" width="1" height="4" fill="#B4C7EB"/><rect x="131" y="0" width="1" height="4" fill="#B4C7EB"/><rect x="134" y="0" width="1" height="4" fill="#B4C7EB"/><rect x="138" y="0" width="1" height="4" fill="#B4C7EB"/><rect x="141" y="0" width="1" height="4" fill="#B4C7EB"/><rect x="145" y="0" width="1" height="4" fill="#B4C7EB"/><rect x="148" y="0" width="1" height="4" fill="#B4C7EB"/><rect x="152" y="0" width="1" height="4" fill="#B4C7EB"/><rect x="155" y="0" width="1" height="4" fill="#B4C7EB"/><rect x="159" y="0" width="1" height="4" fill="#B4C7EB"/><rect x="162" y="0" width="1" height="4" fill="#B4C7EB"/><rect x="166" y="0" width="1" height="4" fill="#B4C7EB"/><rect x="169" y="0" width="1" height="4" fill="#B4C7EB"/><rect x="173" y="0" width="1" height="4" fill="#B4C7EB"/><rect x="176" y="0" width="1" height="4" fill="#B4C7EB"/><rect x="180" y="0" width="1" height="4" fill="#B4C7EB"/><rect x="183" y="0" width="1" height="4" fill="#B4C7EB"/><rect x="187" y="0" width="1" height="4" fill="#B4C7EB"/><rect x="190" y="0" width="1" height="4" fill="#B4C7EB"/><rect x="194" y="0" width="1" height="4" fill="#B4C7EB"/><rect x="197" y="0" width="1" height="4" fill="#B4C7EB"/><rect x="201" y="0" width="1" height="4" fill="#B4C7EB"/><rect x="204" y="0" width="1" height="6" fill="#B4C7EB"/><rect x="208" y="0" width="1" height="4" fill="#B4C7EB"/><rect x="211" y="0" width="1" height="4" fill="#B4C7EB"/><rect x="215" y="0" width="1" height="4" fill="#B4C7EB"/><rect x="218" y="0" width="1" height="4" fill="#B4C7EB"/><rect x="222" y="0" width="1" height="4" fill="#B4C7EB"/><rect x="225" y="0" width="1" height="4" fill="#B4C7EB"/><rect x="229" y="0" width="1" height="4" fill="#B4C7EB"/><rect x="232" y="0" width="1" height="4" fill="#B4C7EB"/><rect x="236" y="0" width="1" height="4" fill="#B4C7EB"/><rect x="239" y="0" width="1" height="4" fill="#B4C7EB"/><rect x="243" y="0" width="1" height="4" fill="#B4C7EB"/><rect x="246" y="0" width="1" height="4" fill="#B4C7EB"/><rect x="250" y="0" width="1" height="4" fill="#B4C7EB"/><rect x="253" y="0" width="1" height="4" fill="#B4C7EB"/><rect x="257" y="0" width="1" height="4" fill="#B4C7EB"/><rect x="260" y="0" width="1" height="4" fill="#B4C7EB"/><rect x="264" y="0" width="1" height="4" fill="#B4C7EB"/><rect x="267" y="0" width="1" height="4" fill="#B4C7EB"/><rect x="271" y="0" width="1" height="4" fill="#B4C7EB"/><rect x="274" y="0" width="1" height="4" fill="#B4C7EB"/><rect x="278" y="0" width="1" height="4" fill="#B4C7EB"/><rect x="281" y="0" width="1" height="4" fill="#B4C7EB"/><rect x="285" y="0" width="1" height="4" fill="#B4C7EB"/><rect x="288" y="0" width="1" height="4" fill="#B4C7EB"/><rect x="292" y="0" width="1" height="4" fill="#B4C7EB"/><rect x="295" y="0" width="1" height="4" fill="#B4C7EB"/><rect x="299" y="0" width="1" height="4" fill="#B4C7EB"/><rect x="302" y="0" width="1" height="4" fill="#B4C7EB"/><rect x="306" y="0" width="1" height="4" fill="#B4C7EB"/><rect x="309" y="0" width="1" height="4" fill="#B4C7EB"/><rect x="313" y="0" width="1" height="4" fill="#B4C7EB"/><rect x="316" y="0" width="1" height="4" fill="#B4C7EB"/><rect x="320" y="0" width="1" height="4" fill="#B4C7EB"/><rect x="323" y="0" width="1" height="4" fill="#B4C7EB"/><rect x="327" y="0" width="1" height="4" fill="#B4C7EB"/><rect x="330" y="0" width="1" height="4" fill="#B4C7EB"/><rect x="334" y="0" width="1" height="4" fill="#B4C7EB"/><rect x="337" y="0" width="1" height="4" fill="#B4C7EB"/><rect x="341" y="0" width="1" height="4" fill="#B4C7EB"/><rect x="344" y="0" width="1" height="4" fill="#B4C7EB"/><rect x="348" y="0" width="1" height="4" fill="#B4C7EB"/><rect x="351" y="0" width="1" height="4" fill="#B4C7EB"/><rect x="355" y="0" width="1" height="4" fill="#B4C7EB"/><rect x="358" y="0" width="1" height="4" fill="#B4C7EB"/><rect x="362" y="0" width="1" height="4" fill="#B4C7EB"/><rect x="365" y="0" width="1" height="4" fill="#B4C7EB"/><rect x="369" y="0" width="1" height="4" fill="#B4C7EB"/><rect x="372" y="0" width="1" height="4" fill="#B4C7EB"/><rect x="374" y="0" width="1" height="4" fill="#B4C7EB"/></svg>
<svg class="abs" style="left:193px;top:518px;" width="15" height="16" viewBox="0 0 15 16"><path d="M1,0.6 L0.5,1.2 L0.5,8.5 L7.5,15.5 L14.5,8.5 L14.5,1.2 L14,0.6 Z" fill="url(#tg)" stroke="#000" stroke-width="1"/><rect x="1" y="0" width="13" height="1.2" fill="#000"/><g fill="#000"><rect x="3" y="3" width="1" height="1"/><rect x="7" y="3" width="1" height="1"/><rect x="11" y="3" width="1" height="1"/><rect x="5" y="5" width="1" height="1"/><rect x="9" y="5" width="1" height="1"/><rect x="3" y="7" width="1" height="1"/><rect x="7" y="7" width="1" height="1"/><rect x="11" y="7" width="1" height="1"/></g></svg>
<div id="rt" class="abs sl" style="left:8px;top:545px;">real time</div>
<div id="fa" class="abs sl" style="left:189px;top:545px;">faster</div>
<div id="fs" class="abs sl" style="left:356px;top:545px;">fastest</div>
<div class="abs grp" style="left:402px;top:490px;width:392px;height:72px;"></div>
<div class="abs gap" style="left:406px;top:490px;width:29px;"></div><div id="g4" class="abs gt" style="left:408px;top:484px;transform:scaleX(1.105);">Jobs</div>
<div class="abs" style="left:405px;top:502px;width:387px;height:57px;background:#fff;"></div>
<div id="tja" class="abs mono" style="left:528px;top:525px;font-size:11px;line-height:14px;">tot.jobs arrived: 19</div>
<div class="abs" style="left:307px;top:569px;width:56px;height:21px;box-sizing:border-box;border:1px solid #C5C3B3;text-shadow:1px 1px 0 #fff;background:#ECE9D8;color:#ACA899;font-size:11px;line-height:21px;text-align:center;">start</div>
<div class="abs" style="left:369px;top:569px;width:54px;height:21px;box-sizing:border-box;border:1px solid #7F7D72;box-shadow:1px 1px 0 #fff, inset 1px 1px 0 #fff;background:#ECE9D8;color:#000;font-size:11px;line-height:21px;text-align:center;">stop</div>
<div class="abs" style="left:429px;top:569px;width:62px;height:21px;box-sizing:border-box;border:1px solid #7F7D72;box-shadow:1px 1px 0 #fff, inset 1px 1px 0 #fff;background:#ECE9D8;color:#000;font-size:11px;line-height:21px;text-align:center;">pause</div>
</body>
</html>
